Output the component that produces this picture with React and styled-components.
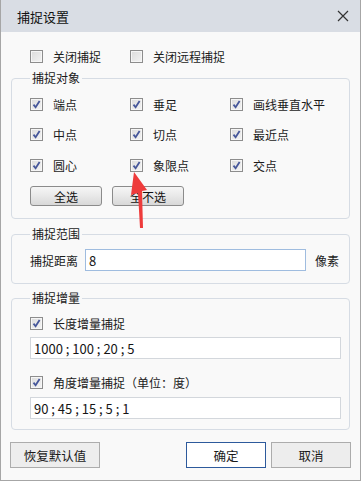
import React from 'react'
import styled, { createGlobalStyle } from 'styled-components'

const GlobalStyle = createGlobalStyle`
    html, body {
        margin:0;
        padding:0;
        background:#ffffff;
    }
    body {
        font-family:"Noto Sans CJK SC", "Microsoft YaHei", sans-serif;
        font-size:12px;
        color:#1b1b1b;
    }
`

const Window = styled.div`
    position:relative;
    width:361px;
    height:481px;
    box-sizing:border-box;
    background:#f9f9f9;
    border:1px solid #a6a6a6;
    border-top:none;
    display:flex;
    flex-direction:column;
    overflow:hidden;
`
const TitleBar = styled.div`
    height:32px;
    margin:0 -1px;
    background:#d9dde4;
    display:flex;
    align-items:center;
    justify-content:space-between;
    padding:0 12px 0 17px;
`
const Title = styled.div`
    font-size:13px;
    color:#111;
`
const Close = styled.svg`
    width:12px;
    height:12px;
`
const TopRow = styled.div`
    display:flex;
    height:20px;
    margin:14px 0 0 29px;
`
const Group = styled.fieldset`
    margin:${p => p.$top}px 10px 0 10px;
    padding:${p => p.$pt}px 9px ${p => p.$pb}px 18px;
    border:1px solid #d6dce4;
    border-radius:4px;
    min-width:0;
`
const Legend = styled.legend`
    padding:0 2px;
    line-height:16px;
    font-size:12px;
`
const Grid = styled.div`
    display:grid;
    grid-template-columns:100px 100px 100px;
    grid-auto-rows:20px;
    row-gap:10.5px;
`
const Check = styled.label`
    display:flex;
    align-items:center;
    height:20px;
    width:${p => p.$w || 'auto'};
    margin-top:${p => p.$mt || 0}px;
    white-space:nowrap;
`
const Box = styled.span`
    width:13px;
    height:13px;
    box-sizing:border-box;
    border:1px solid #8d8d8d;
    background:linear-gradient(135deg, #dcdcdc 0%, #f4f4f4 100%);
    box-shadow:inset 0 0 0 1px #f6f6f6;
    margin-right:10px;
    display:flex;
    align-items:center;
    justify-content:center;
    flex:none;
`
const ButtonRow = styled.div`
    display:flex;
    gap:10px;
    margin-top:11px;
`
const SoftButton = styled.button`
    width:72px;
    height:20px;
    padding:0;
    font-family:inherit;
    font-size:12px;
    color:#111;
    border:1px solid #8b8b8b;
    border-radius:3px;
    background:linear-gradient(#f6f6f6 0%, #e8e8e8 50%, #d8d8d8 100%);
`
const FieldRow = styled.div`
    display:flex;
    align-items:center;
    height:22px;
`
const FieldLabel = styled.span`
    margin-right:7px;
`
const Input = styled.div`
    box-sizing:border-box;
    width:${p => p.$w}px;
    height:22px;
    margin-top:${p => p.$mt || 0}px;
    background:#ffffff;
    border:1px solid ${p => p.$focus ? '#9fbcdf' : '#d3d7dc'};
    display:flex;
    align-items:center;
    padding-left:3px;
    font-size:13px;
    color:#151515;
`
const Unit = styled.span`
    margin-left:9px;
`
const Footer = styled.div`
    display:flex;
    margin:12px 9px 0 9px;
`
const FlatButton = styled.button`
    width:${p => p.$w}px;
    height:26px;
    padding:0;
    margin-left:${p => p.$ml || 0}px;
    font-family:inherit;
    font-size:12.5px;
    color:#1a1a1a;
    background:${p => p.$primary ? '#ffffff' : '#ededed'};
    border:1px solid ${p => p.$primary ? '#2d5a9c' : '#acacac'};
`
const Arrow = styled.svg`
    position:absolute;
    left:126px;
    top:170px;
    width:24px;
    height:62px;
`

const CheckBox = ({ checked, children, w, mt }) => (
    <Check $w={w} $mt={mt}>
        <Box>
            {checked &&
                <svg width="9" height="9" viewBox="0 0 9 9">
                    <path d="M1.5 4.6 L3.6 7.2 L7.6 1" fill="none" stroke="#45569a" strokeWidth="1.8" />
                </svg>}
        </Box>
        {children}
    </Check>
)

const items = ['端点', '垂足', '画线垂直水平', '中点', '切点', '最近点', '圆心', '象限点', '交点']

const App = () => {
    return (
        <>
            <GlobalStyle />
            <Window>
                <TitleBar>
                    <Title>捕捉设置</Title>
                    <Close viewBox="0 0 12 12">
                        <path d="M1 1 L11 11 M11 1 L1 11" stroke="#333" strokeWidth="1.2" />
                    </Close>
                </TitleBar>
                <TopRow>
                    <CheckBox w="100px">关闭捕捉</CheckBox>
                    <CheckBox>关闭远程捕捉</CheckBox>
                </TopRow>
                <Group $top={4} $pt={8} $pb={12}>
                    <Legend>捕捉对象</Legend>
                    <Grid>
                        {items.map(t => <CheckBox key={t} checked>{t}</CheckBox>)}
                    </Grid>
                    <ButtonRow>
                        <SoftButton>全选</SoftButton>
                        <SoftButton>全不选</SoftButton>
                    </ButtonRow>
                </Group>
                <Group $top={7} $pt={7} $pb={12}>
                    <Legend>捕捉范围</Legend>
                    <FieldRow>
                        <FieldLabel>捕捉距离</FieldLabel>
                        <Input $w={221} $focus>8</Input>
                        <Unit>像素</Unit>
                    </FieldRow>
                </Group>
                <Group $top={6} $pt={7} $pb={10}>
                    <Legend>捕捉增量</Legend>
                    <CheckBox checked>长度增量捕捉</CheckBox>
                    <Input $w={311} $mt={4}>1000 ; 100 ; 20 ; 5</Input>
                    <CheckBox checked mt={13}>角度增量捕捉（单位：度）</CheckBox>
                    <Input $w={311} $mt={5}>90 ; 45 ; 15 ; 5 ; 1</Input>
                </Group>
                <Footer>
                    <FlatButton $w={90}>恢复默认值</FlatButton>
                    <FlatButton $w={80} $ml={86} $primary>确定</FlatButton>
                    <FlatButton $w={80} $ml={5}>取消</FlatButton>
                </Footer>
                <Arrow viewBox="0 0 24 62">
                    <polygon points="7,2 20,20 15,21 16,58 13,58 11,23 4,25" fill="#ee3b3b" />
                </Arrow>
            </Window>
        </>
    )
}

export default App
